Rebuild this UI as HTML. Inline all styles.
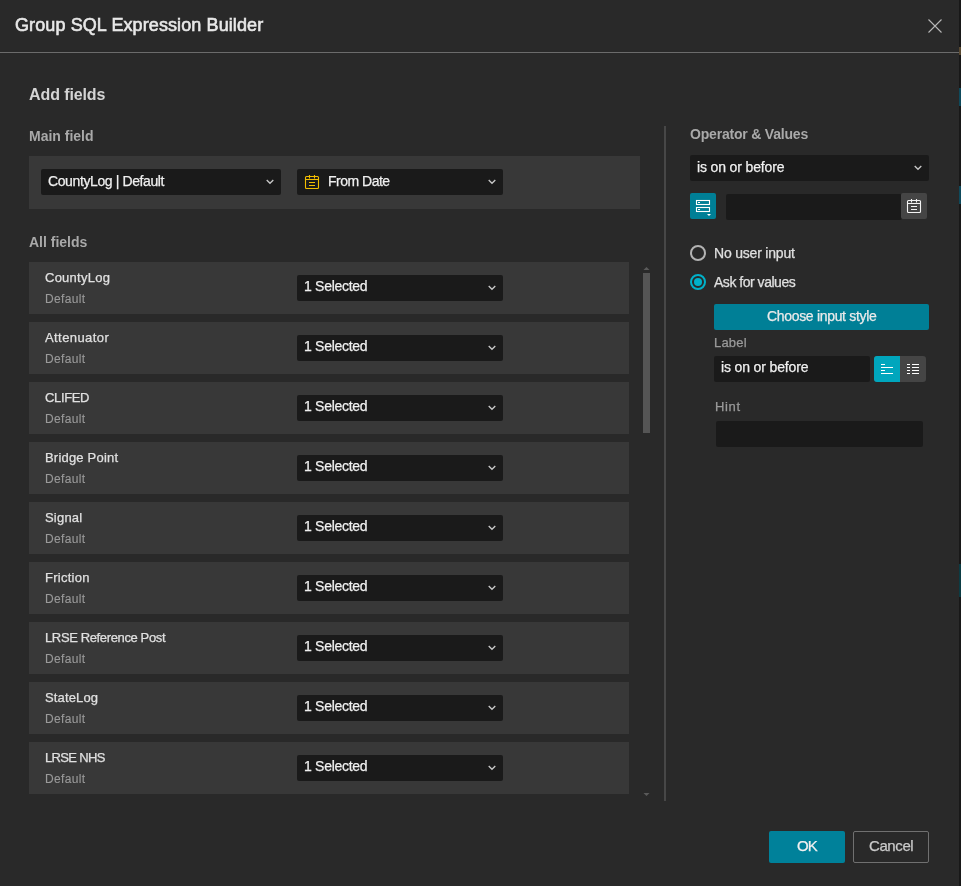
<!DOCTYPE html>
<html><head><meta charset="utf-8">
<style>
*{box-sizing:border-box;margin:0;padding:0}
html,body{width:961px;height:886px;overflow:hidden;background:#181818}
body{font-family:"Liberation Sans",sans-serif;position:relative}
.dlg{position:absolute;left:0;top:0;width:959px;height:886px;background:#292929}
.abs{position:absolute}
.t{position:absolute;white-space:nowrap;line-height:1;will-change:transform;-webkit-text-stroke:0.25px currentColor}
.hdrline{position:absolute;left:0;top:52px;width:959px;height:1px;background:#6b6b6b}
.panel{position:absolute;background:#383838}
.inp{position:absolute;background:#1a1a1a;border-radius:2px}
.row{position:absolute;left:29px;width:600px;height:52px;background:#383838}
.nm{font-size:13px;color:#e0e0e0;letter-spacing:0.25px}
.df{font-size:12px;color:#9a9a9a;letter-spacing:0.35px;-webkit-text-stroke:0.1px #9a9a9a}
.sel{font-size:14px;color:#f0f0f0;letter-spacing:-0.29px}
.hd{font-size:14px;font-weight:700;color:#a9a9a9;-webkit-text-stroke:0}
</style></head><body>
<div class="abs" style="left:959px;top:88px;width:2px;height:18px;background:#0e4a5c"></div>
<div class="abs" style="left:959px;top:186px;width:2px;height:18px;background:#0e4a5c"></div>
<div class="abs" style="left:959px;top:564px;width:2px;height:33px;background:#0b3c44"></div>
<div class="abs" style="left:959px;top:47px;width:2px;height:8px;background:#5a4a32"></div>
<div class="dlg">
  <div class="t" style="left:15px;top:16px;font-size:18px;color:#e8e8e8;letter-spacing:0.1px;-webkit-text-stroke:0.6px #e8e8e8">Group SQL Expression Builder</div>
  <svg class="abs" style="left:927px;top:18px" width="16" height="16" viewBox="0 0 16 16"><path d="M1.5 1.5L14.5 14.5M14.5 1.5L1.5 14.5" stroke="#b8b8b8" stroke-width="1.1"/></svg>
  <div class="hdrline"></div>

  <div class="t" style="left:29px;top:87px;font-size:16px;font-weight:700;color:#d4d4d4;letter-spacing:-0.1px;-webkit-text-stroke:0">Add fields</div>
  <div class="t hd" style="left:29px;top:129px">Main field</div>

  <div class="panel" style="left:29px;top:156px;width:611px;height:53px"></div>
  <div class="inp" style="left:41px;top:169px;width:240px;height:26px"></div>
  <div class="t" style="left:48px;top:174px;font-size:14px;color:#f0f0f0;letter-spacing:-0.39px">CountyLog | Default</div>
  <svg class="abs" style="left:266px;top:179px" width="8" height="6" viewBox="0 0 8 6"><path d="M0.7 1L4 4.3L7.3 1" fill="none" stroke="#c8c8c8" stroke-width="1.3"/></svg>
  <div class="inp" style="left:297px;top:169px;width:206px;height:26px"></div>
  <svg class="abs" style="left:304px;top:174px" width="16" height="16" viewBox="0 0 16 16" fill="none" stroke="#f2bd00" stroke-width="1.1"><rect x="1.5" y="2.5" width="13" height="12" rx="1"/><path d="M1.5 5.5H14.5M5.5 1V4.5M10.5 1V4.5M5 8.5H11M5 11.5H11"/></svg>
  <div class="t" style="left:328px;top:174px;font-size:14px;color:#f0f0f0;letter-spacing:-0.5px">From Date</div>
  <svg class="abs" style="left:488px;top:179px" width="8" height="6" viewBox="0 0 8 6"><path d="M0.7 1L4 4.3L7.3 1" fill="none" stroke="#c8c8c8" stroke-width="1.3"/></svg>

  <div class="t hd" style="left:29px;top:235px">All fields</div>

  <div class="row" style="top:262px"></div>
  <div class="t nm" style="left:45px;top:271px;letter-spacing:0.25px">CountyLog</div>
  <div class="t df" style="left:45px;top:293px">Default</div>
  <div class="inp" style="left:297px;top:275px;width:206px;height:26px"></div>
  <div class="t sel" style="left:304px;top:279px">1 Selected</div>
  <svg class="abs" style="left:488px;top:285px" width="8" height="6" viewBox="0 0 8 6"><path d="M0.7 1L4 4.3L7.3 1" fill="none" stroke="#c8c8c8" stroke-width="1.3"/></svg>
  <div class="row" style="top:322px"></div>
  <div class="t nm" style="left:45px;top:331px;letter-spacing:0.42px">Attenuator</div>
  <div class="t df" style="left:45px;top:353px">Default</div>
  <div class="inp" style="left:297px;top:335px;width:206px;height:26px"></div>
  <div class="t sel" style="left:304px;top:339px">1 Selected</div>
  <svg class="abs" style="left:488px;top:345px" width="8" height="6" viewBox="0 0 8 6"><path d="M0.7 1L4 4.3L7.3 1" fill="none" stroke="#c8c8c8" stroke-width="1.3"/></svg>
  <div class="row" style="top:382px"></div>
  <div class="t nm" style="left:45px;top:391px;letter-spacing:-0.35px">CLIFED</div>
  <div class="t df" style="left:45px;top:413px">Default</div>
  <div class="inp" style="left:297px;top:395px;width:206px;height:26px"></div>
  <div class="t sel" style="left:304px;top:399px">1 Selected</div>
  <svg class="abs" style="left:488px;top:405px" width="8" height="6" viewBox="0 0 8 6"><path d="M0.7 1L4 4.3L7.3 1" fill="none" stroke="#c8c8c8" stroke-width="1.3"/></svg>
  <div class="row" style="top:442px"></div>
  <div class="t nm" style="left:45px;top:451px;letter-spacing:0.2px">Bridge Point</div>
  <div class="t df" style="left:45px;top:473px">Default</div>
  <div class="inp" style="left:297px;top:455px;width:206px;height:26px"></div>
  <div class="t sel" style="left:304px;top:459px">1 Selected</div>
  <svg class="abs" style="left:488px;top:465px" width="8" height="6" viewBox="0 0 8 6"><path d="M0.7 1L4 4.3L7.3 1" fill="none" stroke="#c8c8c8" stroke-width="1.3"/></svg>
  <div class="row" style="top:502px"></div>
  <div class="t nm" style="left:45px;top:511px;letter-spacing:0.2px">Signal</div>
  <div class="t df" style="left:45px;top:533px">Default</div>
  <div class="inp" style="left:297px;top:515px;width:206px;height:26px"></div>
  <div class="t sel" style="left:304px;top:519px">1 Selected</div>
  <svg class="abs" style="left:488px;top:525px" width="8" height="6" viewBox="0 0 8 6"><path d="M0.7 1L4 4.3L7.3 1" fill="none" stroke="#c8c8c8" stroke-width="1.3"/></svg>
  <div class="row" style="top:562px"></div>
  <div class="t nm" style="left:45px;top:571px;letter-spacing:0.25px">Friction</div>
  <div class="t df" style="left:45px;top:593px">Default</div>
  <div class="inp" style="left:297px;top:575px;width:206px;height:26px"></div>
  <div class="t sel" style="left:304px;top:579px">1 Selected</div>
  <svg class="abs" style="left:488px;top:585px" width="8" height="6" viewBox="0 0 8 6"><path d="M0.7 1L4 4.3L7.3 1" fill="none" stroke="#c8c8c8" stroke-width="1.3"/></svg>
  <div class="row" style="top:622px"></div>
  <div class="t nm" style="left:45px;top:631px;letter-spacing:-0.37px">LRSE Reference Post</div>
  <div class="t df" style="left:45px;top:653px">Default</div>
  <div class="inp" style="left:297px;top:635px;width:206px;height:26px"></div>
  <div class="t sel" style="left:304px;top:639px">1 Selected</div>
  <svg class="abs" style="left:488px;top:645px" width="8" height="6" viewBox="0 0 8 6"><path d="M0.7 1L4 4.3L7.3 1" fill="none" stroke="#c8c8c8" stroke-width="1.3"/></svg>
  <div class="row" style="top:682px"></div>
  <div class="t nm" style="left:45px;top:691px;letter-spacing:0.15px">StateLog</div>
  <div class="t df" style="left:45px;top:713px">Default</div>
  <div class="inp" style="left:297px;top:695px;width:206px;height:26px"></div>
  <div class="t sel" style="left:304px;top:699px">1 Selected</div>
  <svg class="abs" style="left:488px;top:705px" width="8" height="6" viewBox="0 0 8 6"><path d="M0.7 1L4 4.3L7.3 1" fill="none" stroke="#c8c8c8" stroke-width="1.3"/></svg>
  <div class="row" style="top:742px"></div>
  <div class="t nm" style="left:45px;top:751px;letter-spacing:-0.66px">LRSE NHS</div>
  <div class="t df" style="left:45px;top:773px">Default</div>
  <div class="inp" style="left:297px;top:755px;width:206px;height:26px"></div>
  <div class="t sel" style="left:304px;top:759px">1 Selected</div>
  <svg class="abs" style="left:488px;top:765px" width="8" height="6" viewBox="0 0 8 6"><path d="M0.7 1L4 4.3L7.3 1" fill="none" stroke="#c8c8c8" stroke-width="1.3"/></svg>

  <!-- scrollbar -->
  <svg class="abs" style="left:643px;top:266px" width="7" height="5" viewBox="0 0 7 5"><path d="M0.5 4L3.5 1L6.5 4Z" fill="#5a5a5a"/></svg>
  <div class="abs" style="left:643px;top:273px;width:7px;height:160px;background:#555555"></div>
  <svg class="abs" style="left:643px;top:792px" width="7" height="5" viewBox="0 0 7 5"><path d="M0.5 1L3.5 4L6.5 1Z" fill="#5a5a5a"/></svg>

  <div class="abs" style="left:664px;top:126px;width:2px;height:675px;background:#474747"></div>

  <div class="t hd" style="left:690px;top:127px;letter-spacing:-0.2px">Operator &amp; Values</div>
  <div class="inp" style="left:690px;top:155px;width:239px;height:26px"></div>
  <div class="t" style="left:697px;top:160px;font-size:14px;color:#f0f0f0;letter-spacing:-0.14px">is on or before</div>
  <svg class="abs" style="left:914px;top:165px" width="8" height="6" viewBox="0 0 8 6"><path d="M0.7 1L4 4.3L7.3 1" fill="none" stroke="#c8c8c8" stroke-width="1.3"/></svg>

  <div class="abs" style="left:690px;top:193px;width:26px;height:26px;background:#007f96;border-radius:2px"></div>
  <svg class="abs" style="left:690px;top:193px" width="26" height="26" viewBox="0 0 26 26" fill="none" stroke="#fff" stroke-width="1.1"><rect x="6.5" y="7.5" width="13" height="4"/><rect x="6.5" y="14.5" width="13" height="4"/><path d="M8 9.5H10M8 16.5H10"/><path d="M17 21H21L19 23Z" fill="#fff" stroke="none"/></svg>
  <div class="inp" style="left:726px;top:194px;width:176px;height:26px"></div>
  <div class="abs" style="left:901px;top:193px;width:26px;height:26px;background:#454545;border-radius:2px"></div>
  <svg class="abs" style="left:906px;top:197px" width="16" height="16" viewBox="0 0 16 16" fill="none" stroke="#f4f4f4" stroke-width="1.1"><rect x="1.5" y="3.5" width="13" height="12" rx="1"/><path d="M1.5 6.5H14.5M5.5 2V5.5M10.5 2V5.5M5 9.5H11M5 12.5H11"/></svg>

  <div class="abs" style="left:690px;top:245px;width:16px;height:16px;border:2px solid #b3b3b3;border-radius:50%"></div>
  <div class="t" style="left:714px;top:246px;font-size:14px;color:#e0e0e0;letter-spacing:-0.2px">No user input</div>
  <div class="abs" style="left:690px;top:274px;width:16px;height:16px;border:2px solid #00b1c9;border-radius:50%"></div>
  <div class="abs" style="left:694px;top:278px;width:8px;height:8px;background:#00b1c9;border-radius:50%"></div>
  <div class="t" style="left:714px;top:275px;font-size:14px;color:#e0e0e0;letter-spacing:-0.48px">Ask for values</div>

  <div class="abs" style="left:714px;top:304px;width:215px;height:26px;background:#007f96;border-radius:2px"></div>
  <div class="t" style="left:767px;top:309px;font-size:14px;color:#eaeaea;letter-spacing:-0.32px">Choose input style</div>

  <div class="t" style="left:714px;top:336px;font-size:13px;color:#9a9a9a;letter-spacing:0.2px">Label</div>
  <div class="inp" style="left:714px;top:356px;width:156px;height:26px"></div>
  <div class="t" style="left:721px;top:360px;font-size:14px;color:#f0f0f0;letter-spacing:-0.14px">is on or before</div>
  <div class="abs" style="left:874px;top:356px;width:52px;height:26px;background:#454545;border-radius:3px;overflow:hidden"><div class="abs" style="left:0;top:0;width:26px;height:26px;background:#00a6bd"></div></div>
  <svg class="abs" style="left:874px;top:356px" width="52" height="26" viewBox="0 0 52 26" stroke="#fff" stroke-width="1.1"><path d="M7 8.5H11M7 11.5H19M7 14.5H11M7 17.5H19"/><path d="M33 8.5H36M38 8.5H45M33 11.5H36M38 11.5H45M33 14.5H36M38 14.5H45M33 17.5H36M38 17.5H45"/></svg>

  <div class="t" style="left:715px;top:400px;font-size:13px;color:#9a9a9a;letter-spacing:0.67px">Hint</div>
  <div class="inp" style="left:716px;top:421px;width:207px;height:26px"></div>

  <div class="abs" style="left:769px;top:831px;width:76px;height:32px;background:#00819a;border-radius:2px"></div>
  <div class="t" style="left:797px;top:838px;font-size:15px;color:#f0f0f0;letter-spacing:-1px">OK</div>
  <div class="abs" style="left:853px;top:831px;width:76px;height:32px;border:1px solid #707070;border-radius:2px"></div>
  <div class="t" style="left:869px;top:838px;font-size:15px;color:#cacaca;letter-spacing:-0.4px">Cancel</div>
</div>
</body></html>
